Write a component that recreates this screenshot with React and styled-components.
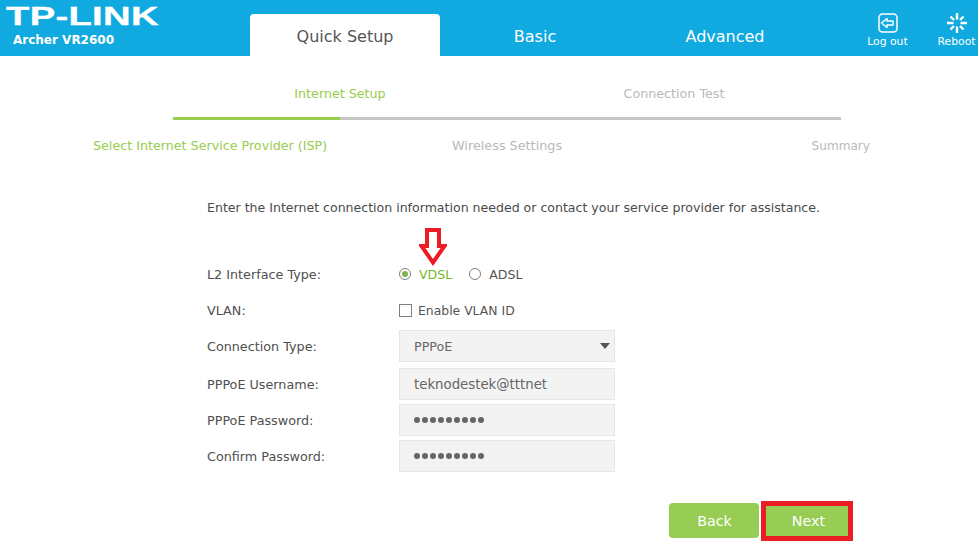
import React from "react";
import styled, { createGlobalStyle } from "styled-components";

const GlobalStyle = createGlobalStyle`
  html, body { margin: 0; padding: 0; background: #fff; overflow: hidden; }
  body { font-family: "DejaVu Sans", Verdana, sans-serif; }
`;

const Page = styled.div`
  width: 978px;
  height: 541px;
  overflow: hidden;
`;

const Header = styled.header`
  height: 56px;
  background: #10a9e0;
  display: flex;
  align-items: flex-end;
`;

const Brand = styled.div`
  width: 250px;
  flex: none;
  height: 56px;
  padding: 5px 0 0 6px;
  box-sizing: border-box;
  color: #fff;
`;

const Logo = styled.div`
  font-family: "Liberation Sans", Arial, sans-serif;
  font-weight: 700;
  font-size: 26px;
  line-height: 23px;
  letter-spacing: 0.2px;
  transform: scaleX(1.47);
  transform-origin: left center;
  -webkit-text-stroke: 0.3px #fff;
`;

const Model = styled.div`
  font-family: "DejaVu Sans", sans-serif;
  font-weight: 700;
  font-size: 12px;
  line-height: 16px;
  margin: 4px 0 0 7px;
  white-space: nowrap;
`;

const Tabs = styled.nav`
  display: flex;
  flex: none;
  width: 570px;
`;

const Tab = styled.div`
  width: 190px;
  height: 42px;
  display: flex;
  align-items: center;
  justify-content: center;
  font-size: 16px;
  padding-top: 2px;
  box-sizing: border-box;
  border-radius: 4px 4px 0 0;
  background: ${(p) => (p.$active ? "#fff" : "transparent")};
  color: ${(p) => (p.$active ? "#555" : "#fff")};
`;

const Tools = styled.div`
  display: flex;
  flex: none;
  height: 56px;
  margin-left: 33px;
`;

const Tool = styled.div`
  width: 69px;
  flex: none;
  display: flex;
  flex-direction: column;
  align-items: center;
  padding-top: 13px;
  box-sizing: border-box;
  color: #fff;
  font-size: 10.8px;
  line-height: 12px;
  gap: 3px;
  white-space: nowrap;
  svg { display: block; }
`;

const Steps = styled.section`
  margin: 30px 0 0 173px;
  width: 668px;
`;

const StepLabels = styled.div`
  display: grid;
  grid-template-columns: 1fr 1fr;
  font-size: 12.7px;
  line-height: 16px;
`;

const StepLabel = styled.span`
  text-align: ${(p) => p.$align || "center"};
  color: ${(p) => (p.$on ? "#97cc4d" : "#b9b9b9")};
  font-size: ${(p) => p.$size || 12.7}px;
`;

const Bar = styled.div`
  height: 3px;
  margin-top: 15px;
  background: #c6c6c6;
`;

const BarFill = styled.div`
  height: 100%;
  width: ${(p) => p.$percent}%;
  background: #97cc4d;
`;

const SubSteps = styled.div`
  display: grid;
  grid-template-columns: 359px 300px 1fr;
  margin: 18px 0 0 93px;
  width: 777px;
  line-height: 16px;
  white-space: nowrap;
`;

const Form = styled.section`
  position: relative;
  margin: 46px 0 0 207px;
  color: #555;
  font-size: 12.56px;
`;

const Intro = styled.p`
  margin: 0 0 40px;
  line-height: 16px;
  color: #4a4a4a;
  white-space: nowrap;
`;

const Row = styled.div`
  display: flex;
  align-items: center;
  height: 36px;
  margin-bottom: ${(p) => p.$after || 0}px;
`;

const Label = styled.label`
  width: 192px;
  flex: none;
  color: #4f4f4f;
  font-size: 12.75px;
`;

const Radio = styled.span`
  width: 10px;
  height: 10px;
  border: 1px solid #808080;
  border-radius: 50%;
  background: #fff;
  display: inline-flex;
  align-items: center;
  justify-content: center;
  flex: none;
  &::after {
    content: "";
    width: 6px;
    height: 6px;
    border-radius: 50%;
    background: ${(p) => (p.$on ? "#7ab648" : "transparent")};
  }
`;

const RadioText = styled.span`
  margin: 0 17px 0 8px;
  color: ${(p) => (p.$on ? "#7ab52e" : "#555")};
`;

const Check = styled.span`
  width: 11px;
  height: 11px;
  border: 1px solid #808080;
  background: #fff;
  margin-right: 6px;
  flex: none;
`;

const CheckText = styled.span`
  font-size: 12.4px;
`;

const Field = styled.div`
  width: 216px;
  height: 32px;
  box-sizing: border-box;
  border: 1px solid #e6e6e6;
  background: #f3f3f3;
  display: flex;
  align-items: center;
  justify-content: space-between;
  padding: 0 4px 0 14px;
  color: #666;
  font-size: ${(p) => p.$size || 12.9}px;
`;

const Dots = styled.span`
  display: flex;
  gap: 2px;
`;

const Dot = styled.i`
  width: 6px;
  height: 6px;
  border-radius: 50%;
  background: #666;
`;

const Caret = styled.span`
  width: 0;
  height: 0;
  border-left: 5.5px solid transparent;
  border-right: 5.5px solid transparent;
  border-top: 6px solid #555;
`;

const ArrowMark = styled.svg`
  position: absolute;
  left: 212px;
  top: 28px;
`;

const Actions = styled.div`
  display: flex;
  align-items: flex-start;
  margin: 29px 0 0 462px;
`;

const Button = styled.div`
  width: ${(p) => p.$w}px;
  height: ${(p) => p.$h}px;
  box-sizing: border-box;
  background: #97cc55;
  color: #fff;
  font-size: 14.3px;
  display: flex;
  align-items: center;
  justify-content: center;
  border-radius: ${(p) => (p.$marked ? 0 : 4)}px;
  border: ${(p) => (p.$marked ? "5px solid #ec1c24" : "none")};
  margin: ${(p) => (p.$marked ? "-2px 0 0 2px" : "0")};
  padding-left: ${(p) => (p.$marked ? 3 : 1)}px;
`;

const dots = Array.from({ length: 9 });

const PasswordDots = () => (
  <Dots>
    {dots.map((_, i) => (
      <Dot key={i} />
    ))}
  </Dots>
);

export default function App() {
  return (
    <Page>
      <GlobalStyle />
      <Header>
        <Brand>
          <Logo>TP-LINK</Logo>
          <Model>Archer VR2600</Model>
        </Brand>
        <Tabs>
          <Tab $active>Quick Setup</Tab>
          <Tab>Basic</Tab>
          <Tab>Advanced</Tab>
        </Tabs>
        <Tools>
          <Tool>
            <svg width="20" height="20" viewBox="0 0 20 20" fill="none" stroke="#fff" strokeWidth="1.5">
              <rect x="1" y="1" width="18" height="18" rx="3.5" />
              <path d="M3.5 10 L9 5.5 V8 H15 V12 H9 V14.5 Z" strokeLinejoin="round" />
            </svg>
            <span>Log out</span>
          </Tool>
          <Tool>
            <svg width="20" height="20" viewBox="0 0 20 20" fill="none" stroke="#fff" strokeWidth="2.4">
              <path d="M10 0 V6.5 M10 13.5 V20 M0 10 H6.5 M13.5 10 H20 M3.5 3.5 L7 7 M13 13 L16.5 16.5 M16.5 3.5 L13 7 M7 13 L3.5 16.5" />
            </svg>
            <span>Reboot</span>
          </Tool>
        </Tools>
      </Header>

      <Steps>
        <StepLabels>
          <StepLabel $on>Internet Setup</StepLabel>
          <StepLabel>Connection Test</StepLabel>
        </StepLabels>
        <Bar>
          <BarFill $percent={25} />
        </Bar>
      </Steps>

      <SubSteps>
        <StepLabel $on $align="left">Select Internet Service Provider (ISP)</StepLabel>
        <StepLabel $align="left" $size={12.8}>Wireless Settings</StepLabel>
        <StepLabel $align="right" $size={12.1}>Summary</StepLabel>
      </SubSteps>

      <Form>
        <Intro>Enter the Internet connection information needed or contact your service provider for assistance.</Intro>
        <ArrowMark width="28" height="38" viewBox="0 0 28 38" fill="#fff" stroke="#ec1c24" strokeWidth="4">
          <path d="M8 2 H20 V18 H25.5 L14 34.5 L2.5 18 H8 Z" />
        </ArrowMark>
        <Row>
          <Label>L2 Interface Type:</Label>
          <Radio $on />
          <RadioText $on>VDSL</RadioText>
          <Radio />
          <RadioText>ADSL</RadioText>
        </Row>
        <Row>
          <Label>VLAN:</Label>
          <Check />
          <CheckText>Enable VLAN ID</CheckText>
        </Row>
        <Row $after={2}>
          <Label>Connection Type:</Label>
          <Field $size={12.7}>
            PPPoE
            <Caret />
          </Field>
        </Row>
        <Row>
          <Label>PPPoE Username:</Label>
          <Field $size={13.3}>teknodestek@tttnet</Field>
        </Row>
        <Row>
          <Label>PPPoE Password:</Label>
          <Field>
            <PasswordDots />
          </Field>
        </Row>
        <Row>
          <Label>Confirm Password:</Label>
          <Field>
            <PasswordDots />
          </Field>
        </Row>
        <Actions>
          <Button $w={90} $h={35}>Back</Button>
          <Button $w={92} $h={40} $marked>Next</Button>
        </Actions>
      </Form>
    </Page>
  );
}
